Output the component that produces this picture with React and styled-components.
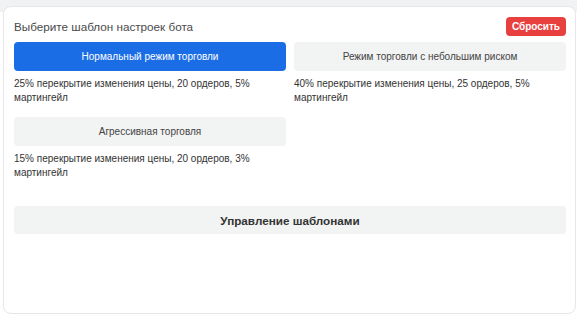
import React from "react"
import styled, { createGlobalStyle } from "styled-components"

const GlobalStyle = createGlobalStyle`
  html, body {
    margin: 0;
    padding: 0;
    background: #ffffff;
  }
  body {
    font-family: "Liberation Sans", Arial, sans-serif;
    color: #333333;
  }
`

const templates = [
  {
    id: "normal",
    title: "Нормальный режим торговли",
    text: "25% перекрытие изменения цены, 20 ордеров, 5% мартингейл",
  },
  {
    id: "low-risk",
    title: "Режим торговли с небольшим риском",
    text: "40% перекрытие изменения цены, 25 ордеров, 5% мартингейл",
  },
  {
    id: "aggressive",
    title: "Агрессивная торговля",
    text: "15% перекрытие изменения цены, 20 ордеров, 3% мартингейл",
  },
]

const App = () => {
  const active = "normal"
  return (
    <>
      <GlobalStyle />
      <Page>
        <Card>
          <Header>
            <Title>Выберите шаблон настроек бота</Title>
            <ResetButton type="button">Сбросить</ResetButton>
          </Header>
          <Grid>
            {templates.map((t) => (
              <Option key={t.id}>
                <TemplateButton type="button" $active={t.id === active}>
                  {t.title}
                </TemplateButton>
                <Description>{t.text}</Description>
              </Option>
            ))}
          </Grid>
          <ManageButton type="button">Управление шаблонами</ManageButton>
        </Card>
      </Page>
    </>
  )
}

const Page = styled.div`
  width: 584px;
  height: 317px;
  box-sizing: border-box;
  padding: 6px 8px 3px 3px;
  background: linear-gradient(#f1f2f4, #f1f2f4) no-repeat 0 0 / 577px 12px;
`

const Card = styled.div`
  box-sizing: border-box;
  height: 100%;
  background: #ffffff;
  border: 1px solid #e6e7ea;
  border-radius: 8px;
  padding: 9px 9px 10px 10px;
`

const Header = styled.div`
  display: flex;
  align-items: center;
  justify-content: space-between;
  height: 20px;
  margin-bottom: 6px;
`

const Title = styled.h2`
  margin: 0;
  font-size: 11.7px;
  font-weight: normal;
  color: #4a4a4a;
`

const ResetButton = styled.button`
  height: 19px;
  padding: 0 6px;
  border: none;
  border-radius: 4px;
  background: #e8403f;
  color: #ffffff;
  font-family: inherit;
  font-size: 10px;
  font-weight: bold;
  cursor: pointer;
`

const Grid = styled.div`
  display: grid;
  grid-template-columns: 1fr 1fr;
  column-gap: 8px;
  row-gap: 12px;
`

const Option = styled.div`
  display: flex;
  flex-direction: column;
`

const TemplateButton = styled.button`
  height: 29px;
  border: none;
  border-radius: 4px;
  background: ${(p) => (p.$active ? "#1b6de6" : "#f2f3f3")};
  color: ${(p) => (p.$active ? "#ffffff" : "#444444")};
  font-family: inherit;
  font-size: 10px;
  cursor: pointer;
`

const Description = styled.p`
  margin: 6px 0 0;
  font-size: 10px;
  line-height: 14px;
  color: #333333;
  padding-right: 30px;
`

const ManageButton = styled.button`
  display: block;
  width: 100%;
  height: 28px;
  margin-top: 26px;
  border: none;
  border-radius: 4px;
  background: #f2f3f3;
  color: #333333;
  font-family: inherit;
  font-size: 11.7px;
  font-weight: bold;
  cursor: pointer;
`

export default App
